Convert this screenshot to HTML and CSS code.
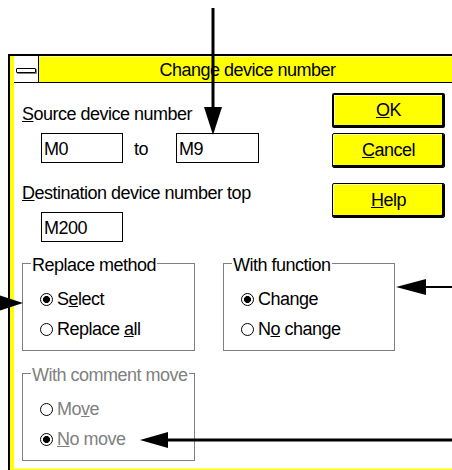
FILE: index.html
```html
<!DOCTYPE html>
<html lang="en">
<head>
<meta charset="utf-8">
<title>Change device number</title>
<link rel="stylesheet" href="styles.css">
</head>
<body>
<div class="window">
  <div class="titlebar">
    <div class="sysmenu"><span class="sysbar"></span></div>
    <div class="title">Change device number</div>
  </div>
  <div class="client">
    <div class="top">
      <div class="left">
        <div class="label"><u>S</u>ource device number</div>
        <div class="fieldrow">
          <div class="field w82">M0</div>
          <div class="to">to</div>
          <div class="field w83">M9</div>
        </div>
        <div class="label label2"><u>D</u>estination device number top</div>
        <div class="fieldrow">
          <div class="field w82">M200</div>
        </div>
      </div>
      <div class="buttons">
        <button class="btn default"><span><u>O</u>K</span></button>
        <button class="btn cancel"><span><u>C</u>ancel</span></button>
        <button class="btn help"><span><u>H</u>elp</span></button>
      </div>
    </div>
    <div class="groups">
      <fieldset class="group g-replace">
        <legend>Replace method</legend>
        <div class="opts">
          <div class="opt"><span class="radio on"></span><span>S<u>e</u>lect</span></div>
          <div class="opt"><span class="radio"></span><span>Replace <u>a</u>ll</span></div>
        </div>
      </fieldset>
      <fieldset class="group g-function">
        <legend>With function</legend>
        <div class="opts">
          <div class="opt"><span class="radio on"></span><span>Chan<u>g</u>e</span></div>
          <div class="opt"><span class="radio"></span><span>N<u>o</u> change</span></div>
        </div>
      </fieldset>
    </div>
    <fieldset class="group g-comment disabled">
      <legend>With comment move</legend>
      <div class="opts">
        <div class="opt"><span class="radio"></span><span>Mo<u>v</u>e</span></div>
        <div class="opt"><span class="radio on"></span><span><u>N</u>o move</span></div>
      </div>
    </fieldset>
  </div>
</div>
<svg class="annot" width="452" height="470" viewBox="0 0 452 470" aria-hidden="true">
  <line x1="213" y1="8" x2="213" y2="110" stroke="#000" stroke-width="3"/>
  <polygon points="204,107 222,107 213,135" fill="#000"/>
  <polygon points="-3,294.5 -3,311.5 23,303" fill="#000"/>
  <line x1="424" y1="287" x2="452" y2="287" stroke="#000" stroke-width="2"/>
  <polygon points="396,287 426,279 426,295" fill="#000"/>
  <line x1="166" y1="440" x2="452" y2="440" stroke="#000" stroke-width="3"/>
  <polygon points="140,440 168,432 168,448" fill="#000"/>
</svg>
</body>
</html>
```
FILE: styles.css
```css
html, body {
  margin: 0;
  overflow: hidden;
  background: #fff;
}
body {
  font-family: "Liberation Sans", Arial, sans-serif;
  font-size: 18px;
  letter-spacing: -0.5px;
  line-height: 20px;
  color: #000;
}
.window {
  margin: 54px 0 0 8px;
  width: 442px;
  border: 2px solid #000;
  border-bottom: none;
  padding: 0 4px 4px;
  background: #ff0;
}
.titlebar {
  display: flex;
  height: 26px;
  border-bottom: 1px solid #000;
  background: #ff0;
  box-shadow: inset 0 1px #ffff99;
}
.sysmenu {
  width: 24px;
  background: #fff;
  border-right: 1px solid #000;
  display: flex;
  align-items: center;
  justify-content: center;
}
.sysbar {
  width: 20px;
  height: 5px;
  box-sizing: border-box;
  border: 1px solid #000;
  border-radius: 1px;
  background: #fff;
  margin-top: 3px;
  box-shadow: 1px 1px 0 #808080;
}
.title {
  flex: 1;
  text-align: center;
  line-height: 23px;
  padding-top: 3px;
  white-space: nowrap;
}
.client {
  background: #fff;
  padding: 10px 0 7px 8px;
  box-shadow: 0 1px #ffff90;
}
.top {
  display: flex;
}
.left {
  width: 310px;
  padding-top: 11px;
}
.label {
  white-space: nowrap;
}
.label2 {
  margin-top: 20px;
}
.fieldrow {
  display: flex;
  margin-top: 9px;
  padding-left: 19px;
}
.field {
  height: 30px;
  box-sizing: border-box;
  border: 1px solid #000;
  padding: 5px 2px;
}
.w82 { width: 82px; }
.w83 { width: 83px; }
.to {
  width: 53px;
  box-sizing: border-box;
  padding: 6px 0 0 11px;
}
.buttons {
  display: flex;
  flex-direction: column;
}
.btn {
  width: 113px;
  height: 35px;
  box-sizing: border-box;
  font: inherit;
  letter-spacing: inherit;
  line-height: 20px;
  color: #000;
  background: #ff0;
  border: 1px solid #000;
  border-radius: 2px;
  box-shadow: inset -2px -2px #000, inset 1px 1px #ffffa8;
  padding: 0 0 1px;
  display: flex;
  align-items: center;
  justify-content: center;
}
.btn.default {
  border-width: 2px;
  box-shadow: inset -1px -1px #000, inset 1px 1px #ffffa8;
}
.cancel { margin-top: 5px; }
.help { margin-top: 15px; }
.groups {
  display: flex;
  gap: 28px;
  margin-top: 9px;
}
.group {
  margin: 0;
  padding: 14px 0 11px 0;
  border: 1px solid #808080;
  min-width: 0;
  box-sizing: border-box;
}
.group legend {
  padding: 4px 1px 0;
  margin-left: 8px;
  line-height: 20px;
  white-space: nowrap;
}
.g-replace { width: 173px; }
.g-function { width: 172px; }
.g-comment {
  width: 173px;
  margin-top: 10px;
}
.opts {
  padding-left: 17px;
  display: flex;
  flex-direction: column;
  gap: 10px;
}
.opt {
  display: flex;
  align-items: center;
  height: 20px;
  white-space: nowrap;
}
.radio {
  flex: none;
  width: 13px;
  height: 13px;
  box-sizing: border-box;
  border: 1px solid #000;
  border-radius: 50%;
  background: #fff;
  margin-right: 4px;
}
.radio.on {
  border-width: 1.5px;
  background: radial-gradient(circle, #000 0 3.2px, #fff 3.8px);
}
.disabled {
  color: #808080;
}
.annot {
  position: absolute;
  left: 0;
  top: 0;
  pointer-events: none;
}
```
